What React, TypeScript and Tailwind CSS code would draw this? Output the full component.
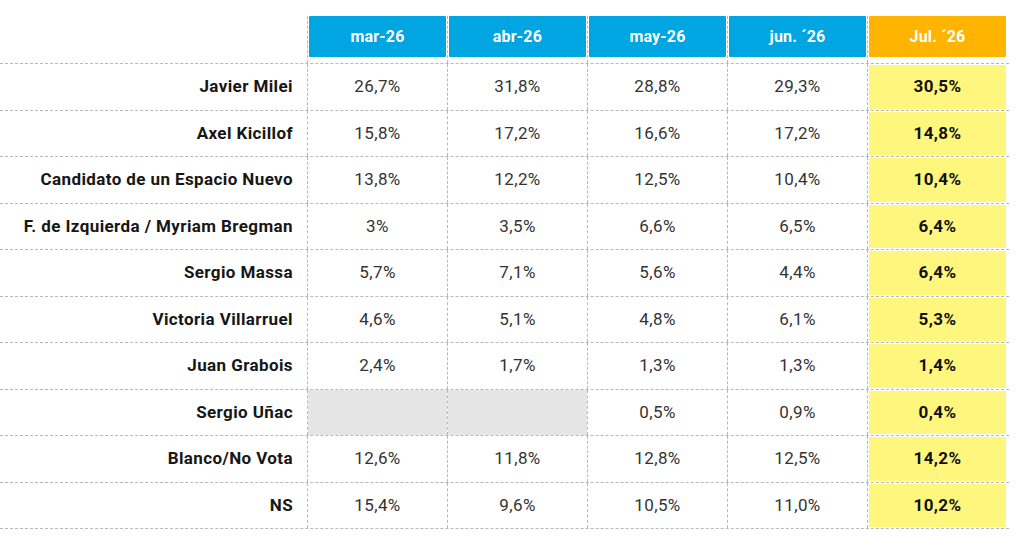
const months = ['mar-26', 'abr-26', 'may-26', 'jun. ´26'];
const current = 'Jul. ´26';

type Row = { name: string; values: (string | null)[]; last: string };

const rows: Row[] = [
  { name: 'Javier Milei', values: ['26,7%', '31,8%', '28,8%', '29,3%'], last: '30,5%' },
  { name: 'Axel Kicillof', values: ['15,8%', '17,2%', '16,6%', '17,2%'], last: '14,8%' },
  { name: 'Candidato de un Espacio Nuevo', values: ['13,8%', '12,2%', '12,5%', '10,4%'], last: '10,4%' },
  { name: 'F. de Izquierda / Myriam Bregman', values: ['3%', '3,5%', '6,6%', '6,5%'], last: '6,4%' },
  { name: 'Sergio Massa', values: ['5,7%', '7,1%', '5,6%', '4,4%'], last: '6,4%' },
  { name: 'Victoria Villarruel', values: ['4,6%', '5,1%', '4,8%', '6,1%'], last: '5,3%' },
  { name: 'Juan Grabois', values: ['2,4%', '1,7%', '1,3%', '1,3%'], last: '1,4%' },
  { name: 'Sergio Uñac', values: [null, null, '0,5%', '0,9%'], last: '0,4%' },
  { name: 'Blanco/No Vota', values: ['12,6%', '11,8%', '12,8%', '12,5%'], last: '14,2%' },
  { name: 'NS', values: ['15,4%', '9,6%', '10,5%', '11,0%'], last: '10,2%' },
];

const line = 'border-dashed border-[#b8b8b8]';

export default function App() {
  return (
    <div
      className="w-[1024px] h-[546px] bg-white pt-4 overflow-hidden"
      style={{ fontFamily: 'Roboto, "Liberation Sans", sans-serif' }}
    >
      <div className="w-[1009px]">
        {/* header */}
        <div className={`grid grid-cols-[307px_repeat(5,140px)] h-[48px] border-b ${line}`}>
          <div />
          {months.map((m) => (
            <div key={m} className={`border-l ${line} px-px pb-[6px]`}>
              <div className="h-full bg-[#00a5e2] rounded-[1px] flex items-center justify-center text-white font-bold text-[16px] tracking-[0.2px]">
                {m}
              </div>
            </div>
          ))}
          <div className={`border-l ${line} px-px pb-[6px]`}>
            <div className="h-full bg-[#ffb500] rounded-[1px] flex items-center justify-center text-white font-bold text-[16px] tracking-[0.2px]">
              {current}
            </div>
          </div>
        </div>

        {/* body */}
        {rows.map((r) => (
          <div key={r.name} className={`grid grid-cols-[307px_repeat(5,140px)] h-[46.5px] border-b ${line}`}>
            <div className="flex items-center justify-end pr-[14px] font-bold text-[17px] tracking-[0.4px] text-[#161616]">
              {r.name}
            </div>
            {r.values.map((v, i) => (
              <div key={i} className={`border-l ${line}`}>
                {v === null ? (
                  <div className="h-full bg-[#e5e5e5]" />
                ) : (
                  <div className="h-full flex items-center justify-center text-[17px] tracking-[0.4px] text-[#333333]">
                    {v}
                  </div>
                )}
              </div>
            ))}
            <div className={`border-l ${line} p-px`}>
              <div className="h-full bg-[#fff67e] flex items-center justify-center font-bold text-[17px] tracking-[0.4px] text-[#111111]">
                {r.last}
              </div>
            </div>
          </div>
        ))}
      </div>
    </div>
  );
}
